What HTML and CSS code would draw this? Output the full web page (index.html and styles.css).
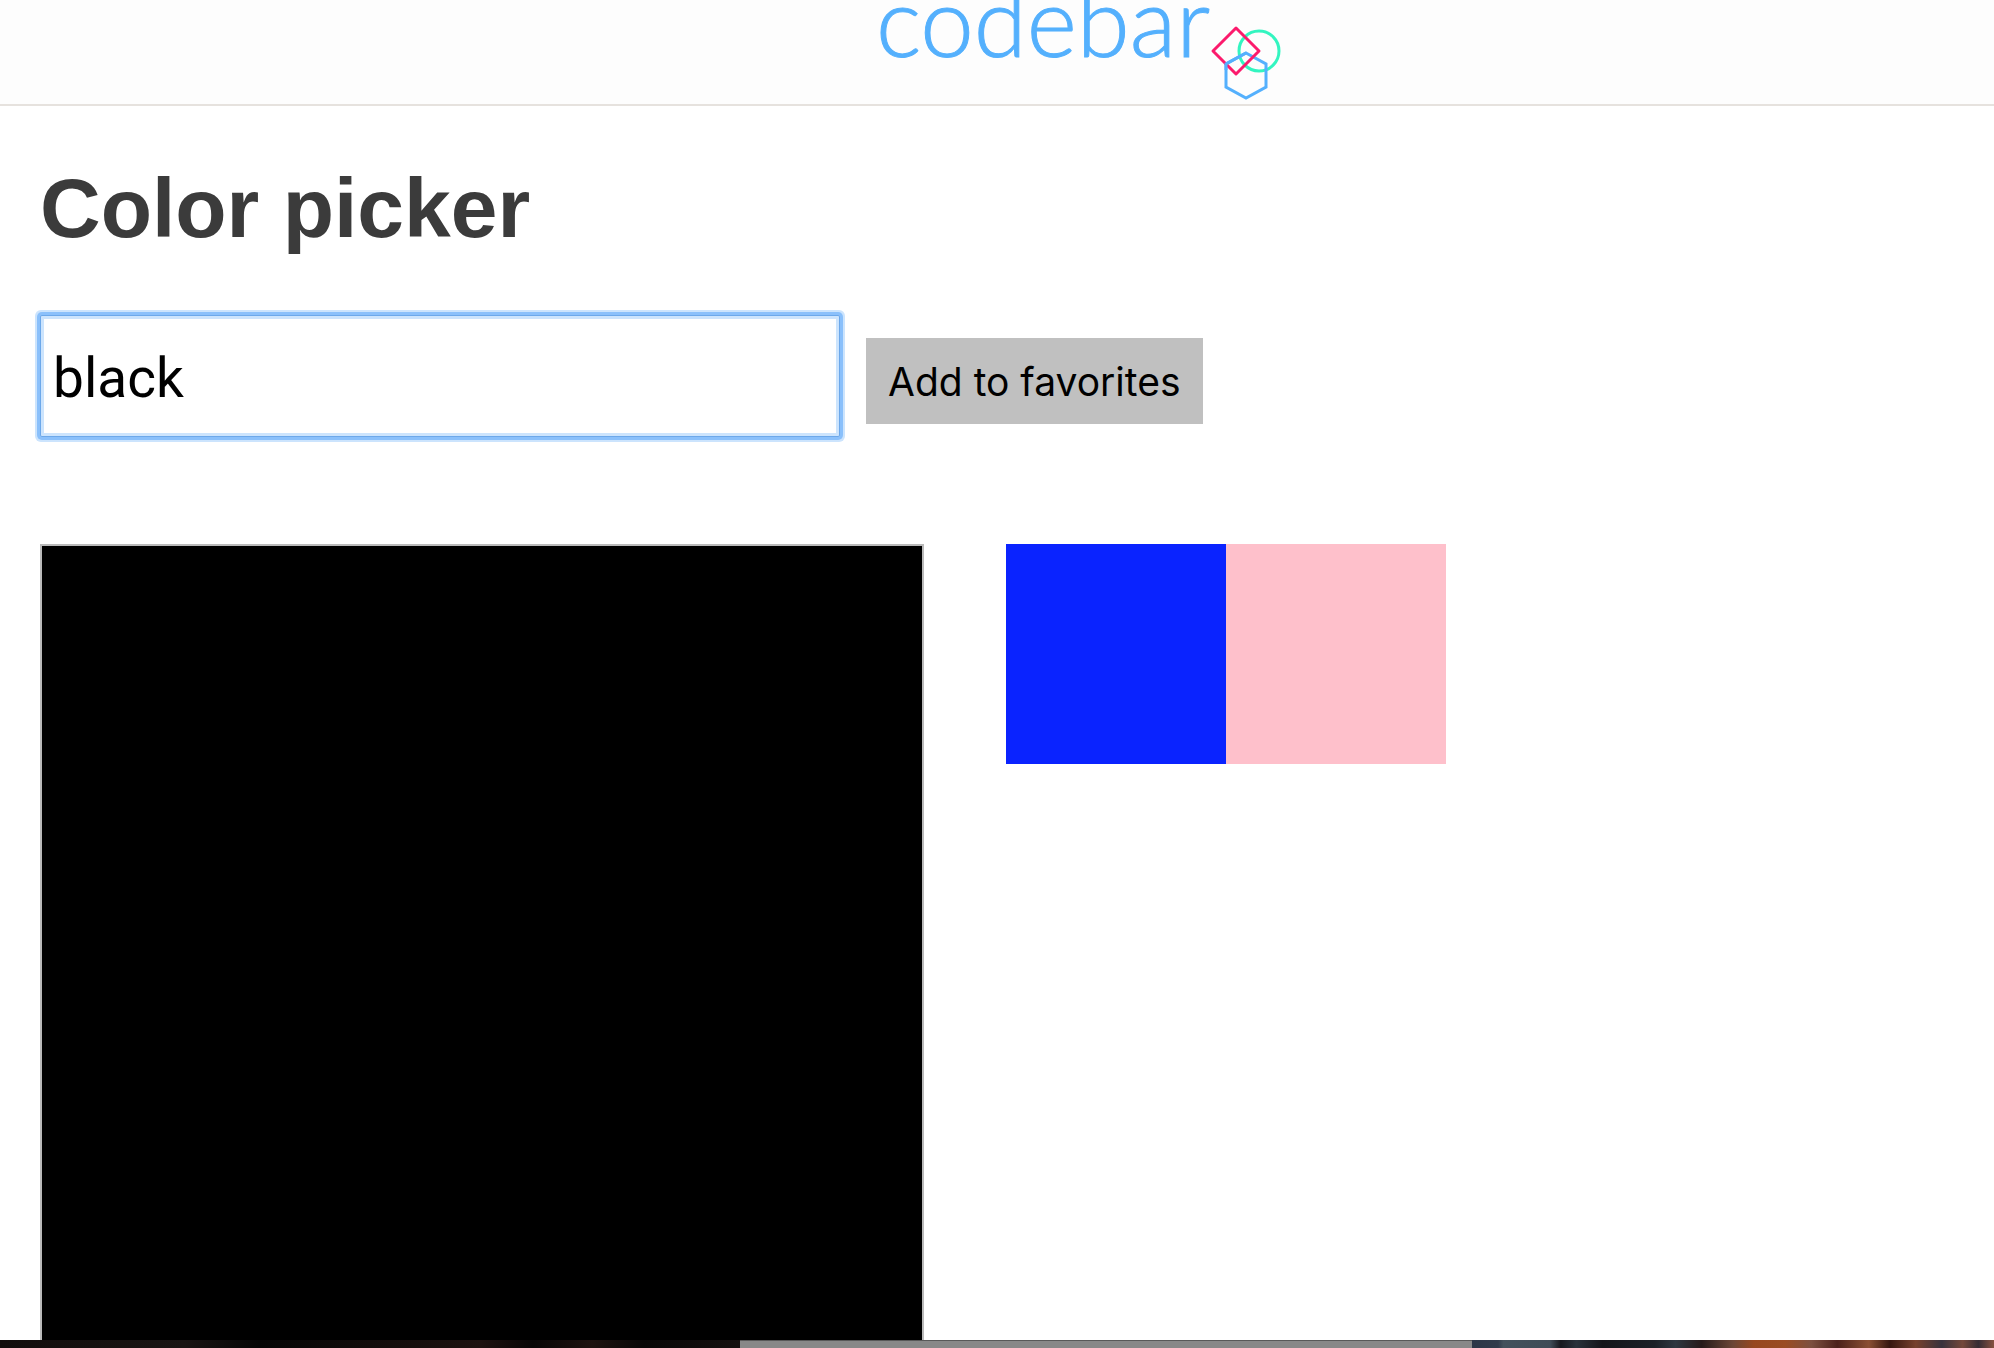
FILE: index.html
```html
<!DOCTYPE html>
<html lang="en">
<head>
  <meta charset="utf-8">
  <meta name="viewport" content="width=device-width, initial-scale=1">
  <title>Color picker</title>
  <link rel="stylesheet" href="styles.css">
</head>
<body>
  <div class="window">
    <header class="site-header">
      <a class="logo" href="#">
        <span class="logo-text">codebar</span>
        <svg class="logo-mark" viewBox="0 0 72 78" width="72" height="78" fill="none" stroke-width="3" aria-hidden="true">
          <circle cx="49" cy="27" r="20" stroke="#33f5c0"/>
          <path d="M36 29L56 40V63L36 74L16 63V40Z" stroke="#54b0fd"/>
          <path d="M26 4L49 27L26 50L3 27Z" stroke="#fc1a6c" stroke-linejoin="round"/>
          <path d="M36 29L16 40V46" stroke="#54b0fd"/>
        </svg>
      </a>
    </header>
    <main class="content">
      <h1 class="title">Color picker</h1>
      <form class="picker">
        <input class="color-input" type="text" value="black" aria-label="Color">
        <button class="favorite-button" type="button">Add to favorites</button>
      </form>
      <div class="colors">
        <div class="preview"></div>
        <div class="favorites">
          <div class="swatch swatch-blue"></div>
          <div class="swatch swatch-pink"></div>
        </div>
      </div>
    </main>
  </div>
  <div class="desktop">
    <div class="desktop-dark"></div>
    <div class="desktop-panel"></div>
    <div class="desktop-photo"></div>
  </div>
</body>
</html>
```
FILE: styles.css
```css
* {
  box-sizing: border-box;
}

body {
  margin: 0;
  height: 100vh;
  display: flex;
  flex-direction: column;
  overflow: hidden;
  background: #fff;
  font-family: Inter, "Liberation Sans", sans-serif;
}

.window {
  flex: 1;
  min-height: 0;
  overflow: hidden;
}

.site-header {
  height: 106px;
  padding-left: 164px;
  display: flex;
  justify-content: center;
  align-items: flex-end;
  overflow: hidden;
  background: #fdfdfd;
  border-bottom: 2px solid #e6e2de;
}

.logo {
  display: flex;
  align-items: flex-end;
  text-decoration: none;
}

.logo-text {
  padding-bottom: 28px;
  color: #54b0fd;
  font-family: Lato, sans-serif;
  font-size: 96px;
  font-weight: 300;
  line-height: 112px;
  -webkit-text-stroke: 1px #54b0fd;
}

.logo-mark {
  flex: none;
  margin-bottom: 2px;
}

.content {
  padding: 54px 40px 0;
}

.title {
  margin: 0;
  color: #3b3b3b;
  font-family: "Liberation Sans", Arial, sans-serif;
  font-size: 84px;
  font-weight: 700;
  line-height: 96px;
}

.picker {
  display: flex;
  align-items: center;
  gap: 26px;
  margin-top: 59px;
}

.color-input {
  width: 800px;
  height: 122px;
  padding: 4px 12px 0;
  border: 1px solid #6ca8ea;
  border-radius: 2px;
  outline: none;
  box-shadow: inset 0 0 0 3px #cce4fd, 0 0 0 3px #8ac0fb, 0 0 0 5px #cce4fd;
  background: #fff;
  color: #000;
  font-family: Roboto, sans-serif;
  font-size: 55px;
}

.favorite-button {
  height: 86px;
  padding: 0 22px;
  margin-top: 10px;
  border: 0;
  background: #c0c0c0;
  color: #000;
  font-family: inherit;
  font-size: 39px;
  white-space: nowrap;
}

.colors {
  display: flex;
  align-items: flex-start;
  gap: 82px;
  margin-top: 107px;
}

.preview {
  flex: none;
  width: 884px;
  height: 884px;
  border: 2px solid #bababa;
  background: #000;
}

.favorites {
  display: flex;
  flex-wrap: wrap;
}

.swatch {
  width: 220px;
  height: 220px;
}

.swatch-blue {
  background: #0a23ff;
}

.swatch-pink {
  background: #fec0cb;
}

.desktop {
  flex: none;
  height: 8px;
  display: grid;
  grid-template-columns: 740fr 732fr 522fr;
}

.desktop-dark {
  background: linear-gradient(90deg, #120e0d, #191413 25%, #060606 35%, #1d1210 65%, #080606 72%, #1d1310 80%, #080707 87%, #15100f);
}

.desktop-panel {
  background: #888;
  border-top: 1px solid #595959;
}

.desktop-photo {
  background: linear-gradient(90deg, #2c3647, #303b4b 5%, #43515c 6%, #3f4c57 15%, #17191f 17%, #29323b 20%, #14151a 25%, #1b2128 35%, #2d3740 39%, #261a1a 44%, #6b4636 50%, #97471f 54%, #9a4c22 60%, #7c5040 65%, #4b211b 70%, #8a4f33 76%, #361710 80%, #77412d 85%, #38323d 90%, #74483a 94%, #352c34 97%, #87513f);
}
```
